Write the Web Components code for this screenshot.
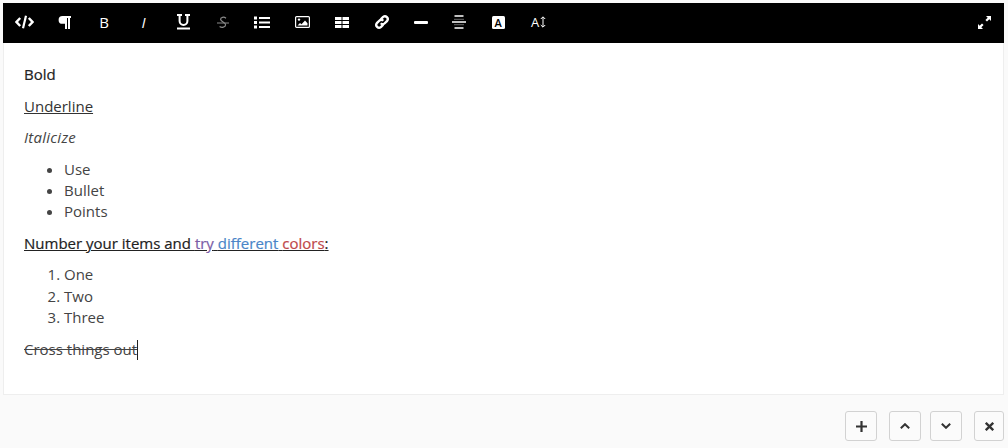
<!DOCTYPE html>
<html lang="en">
<head>
<meta charset="utf-8">
<title>Editor</title>
<style>
    html, body { margin: 0; padding: 0; height: 100%; background: #fafafa; overflow: hidden; }
    body { font-family: "Open Sans", "Liberation Sans", sans-serif; }
    rich-body p { margin: 0 0 10px; }
    rich-body ul, rich-body ol { margin: 0 0 10px; padding-left: 40px; }
    rich-body b { font-weight: 500; color: #222; -webkit-text-stroke: 0.2px #222; }
    rich-body u { color: #333; }
    rich-body i { letter-spacing: 0.25px; }
    rich-body .heading { color: #222; font-weight: 500; -webkit-text-stroke: 0.2px #222; }
    rich-body .purple { color: #7b5ea7; -webkit-text-stroke: 0.2px #7b5ea7; }
    rich-body .blue { color: #4a86c8; -webkit-text-stroke: 0.2px #4a86c8; }
    rich-body .red { color: #c0484a; -webkit-text-stroke: 0.2px #c0484a; }
    rich-body .caret { display: inline-block; width: 1px; height: 20px; background: #222; vertical-align: -5px; }
    svg { display: block; }
    .glyph { font-family: "Open Sans", "Liberation Sans", sans-serif; line-height: 1; }
</style>
</head>
<body>

<template id="editor-frame-template">
    <style>
        :host { display: block; padding: 3px 4px 0 3px; }
        .frame { background: #fff; border: 1px solid #eee; border-top: 0; }
    </style>
    <div class="frame">
        <slot name="toolbar"></slot>
        <slot></slot>
    </div>
</template>

<template id="editor-toolbar-template">
    <style>
        :host { display: flex; align-items: flex-start; height: 40px; background: #000; margin: 0 -1px; padding: 0 0 0 1px; box-sizing: border-box; }
        .tools { display: grid; grid-template-columns: repeat(14, 39.62px); flex: 1; padding-left: 1px; }
    </style>
    <div class="tools"><slot></slot></div>
    <div><slot name="right"></slot></div>
</template>

<template id="tool-button-template">
    <style>
        :host { display: flex; align-items: center; justify-content: center; height: 38px; width: 39.62px; color: #fff; cursor: pointer; }
        :host([muted]) { color: #8a8a8a; }
    </style>
    <slot></slot>
</template>

<template id="rich-body-template">
    <style>
        :host { display: block; box-sizing: border-box; height: 351px; padding: 21.2px 20px 0; font-size: 15px; line-height: 21.45px; color: #444; }
    </style>
    <slot></slot>
</template>

<template id="action-bar-template">
    <style>
        :host { display: flex; justify-content: flex-end; align-items: center; padding: 16px 4px 0 0; }
        .group { display: flex; gap: 9px; margin-left: 12px; }
    </style>
    <div class="group"><slot name="add"></slot></div>
    <div class="group"><slot name="move"></slot></div>
    <div class="group"><slot name="remove"></slot></div>
</template>

<template id="action-button-template">
    <style>
        :host { display: flex; align-items: center; justify-content: center; box-sizing: border-box; width: 32px; height: 30px; background: #fbfbfb; border: 1px solid #d2d2d2; border-radius: 3px; color: #333; cursor: pointer; }
        :host([narrow]) { width: 30px; }
    </style>
    <slot></slot>
</template>

<editor-frame>
    <editor-toolbar slot="toolbar">
        <tool-button><svg width="19" height="14" viewBox="0 0 19 14"><path d="M5.200 3 1.500 7l3.700 4M13.800 3l3.700 4-3.700 4" fill="none" stroke="currentColor" stroke-width="2.400"/><path d="M11 .8 8 13.200" fill="none" stroke="currentColor" stroke-width="2.200"/></svg></tool-button>
        <tool-button><svg width="13" height="13" viewBox="0 0 13 13"><path d="M4.500 0H13v2h-1v11H10V2H9v11H7V7.800H4.500A3.900 3.900 0 0 1 4.500 0z" fill="currentColor"/></svg></tool-button>
        <tool-button><span class="glyph" style="font-size:15px;font-weight:500">B</span></tool-button>
        <tool-button><span class="glyph" style="font-size:15px;font-style:italic">I</span></tool-button>
        <tool-button><svg width="13" height="16" viewBox="0 0 13 16"><path d="M0 1h5M8 1h5M2.600 1v6a3.900 3.900 0 0 0 7.800 0V1" fill="none" stroke="currentColor" stroke-width="2"/><path d="M0 14.500h13" stroke="currentColor" stroke-width="2"/></svg></tool-button>
        <tool-button muted><svg width="12" height="13" viewBox="0 0 12 13"><path d="M9 2.200C7 .6 3.400 1 3.600 3.400c.2 2.400 5.200 2.800 5 5.400C8.400 11.400 4.800 12 2.600 10.600" fill="none" stroke="currentColor" stroke-width="1.200"/><path d="M0 7h12" stroke="currentColor" stroke-width="1"/></svg></tool-button>
        <tool-button><svg width="16" height="13" viewBox="0 0 16 13"><path d="M0 .5h3v3H0zM0 5h3v3H0zM0 9.500h3v3H0z" fill="currentColor"/><path d="M5 2h11M5 6.500h11M5 11h11" stroke="currentColor" stroke-width="2"/></svg></tool-button>
        <tool-button><svg width="15" height="12" viewBox="0 0 15 12"><rect x=".6" y=".6" width="13.800" height="10.800" rx="1" fill="none" stroke="currentColor" stroke-width="1.200"/><circle cx="4" cy="3.600" r="1.200" fill="currentColor"/><path d="M2.500 9.500 5 7l1.500 1.300L10 4.600l2.500 2.600v2.300z" fill="currentColor"/></svg></tool-button>
        <tool-button><svg width="14" height="11" viewBox="0 0 14 11"><path d="M0 0h6.500v3H0zM7.500 0H14v3H7.500zM0 4h6.500v3H0zM7.500 4H14v3H7.500zM0 8h6.500v3H0zM7.500 8H14v3H7.500z" fill="currentColor"/></svg></tool-button>
        <tool-button><svg width="16" height="16" viewBox="0 0 14 14" style="margin-left:2px"><g fill="none" stroke="currentColor" stroke-width="2.100"><path d="M5.900 4.600 8 2.500a2.500 2.500 0 0 1 3.500 3.500L9.400 8.100a2.500 2.500 0 0 1-3.500 0"/><path d="M8.100 9.400 6 11.500A2.500 2.500 0 0 1 2.500 8l2.100-2.100a2.500 2.500 0 0 1 3.500 0"/></g></svg></tool-button>
        <tool-button><svg width="14" height="3" viewBox="0 0 14 3"><rect width="14" height="3" rx="1" fill="currentColor"/></svg></tool-button>
        <tool-button><svg width="14" height="14" viewBox="0 0 14 14" style="margin-right:4px"><path d="M2.500 1h9M0 7h14M2.500 13h9" stroke="currentColor" stroke-width="1.700"/><path d="M2 4.300h10M2 9.700h10" stroke="currentColor" stroke-width="1" opacity=".4"/></svg></tool-button>
        <tool-button><span class="glyph" style="display:flex;align-items:center;justify-content:center;width:13px;height:13px;margin-right:4px;background:#fff;color:#000;border-radius:1.500px;font-size:11px;font-weight:600">A</span></tool-button>
        <tool-button><span class="glyph" style="font-size:13px;font-weight:500;display:flex;align-items:center;gap:1px;margin-right:2px">A<svg width="6" height="12" viewBox="0 0 6 12"><path d="M3 1v10M.8 3 3 .8 5.200 3M.8 9 3 11.200 5.200 9" fill="none" stroke="currentColor" stroke-width="1"/></svg></span></tool-button>
        <tool-button slot="right"><svg width="15" height="15" viewBox="0 0 15 15"><path d="M9 1h5v5l-1.700-1.700-2.300 2.300-1.600-1.600 2.300-2.300zM6 14H1V9l1.700 1.700L5 8.400 6.600 10l-2.300 2.300z" fill="currentColor"/></svg></tool-button>
    </editor-toolbar>
    <rich-body>
        <p><b>Bold</b></p>
        <p><u>Underline</u></p>
        <p><i>Italicize</i></p>
        <ul>
            <li>Use</li>
            <li>Bullet</li>
            <li>Points</li>
        </ul>
        <p><u class="heading">Number your items and <span class="purple">try</span> <span class="blue">different</span> <span class="red">colors</span>:</u></p>
        <ol>
            <li>One</li>
            <li>Two</li>
            <li>Three</li>
        </ol>
        <p><s>Cross things out</s><span class="caret"></span></p>
    </rich-body>
</editor-frame>

<action-bar>
    <action-button slot="add"><svg width="11" height="11" viewBox="0 0 11 11"><path d="M5.500 0v11M0 5.500h11" stroke="currentColor" stroke-width="2.200"/></svg></action-button>
    <action-button slot="move"><svg width="10" height="6" viewBox="0 0 10 6"><path d="M.8 5.200 5 1.200l4.200 4" fill="none" stroke="currentColor" stroke-width="2"/></svg></action-button>
    <action-button slot="move"><svg width="10" height="6" viewBox="0 0 10 6"><path d="M.8.800 5 4.800l4.200-4" fill="none" stroke="currentColor" stroke-width="2"/></svg></action-button>
    <action-button slot="remove" narrow><svg width="9" height="9" viewBox="0 0 9 9"><path d="M.8.800l7.400 7.400M8.200.800.800 8.200" stroke="currentColor" stroke-width="2.300"/></svg></action-button>
</action-bar>

<script>
    function defineFromTemplate(tag, templateId) {
        const template = document.getElementById(templateId);
        customElements.define(tag, class extends HTMLElement {
            constructor() {
                super();
                this.attachShadow({ mode: 'open' });
                this.shadowRoot.appendChild(template.content.cloneNode(true));
            }
        });
    }

    defineFromTemplate('editor-frame', 'editor-frame-template');
    defineFromTemplate('editor-toolbar', 'editor-toolbar-template');
    defineFromTemplate('tool-button', 'tool-button-template');
    defineFromTemplate('rich-body', 'rich-body-template');
    defineFromTemplate('action-bar', 'action-bar-template');
    defineFromTemplate('action-button', 'action-button-template');
</script>
</body>
</html>
